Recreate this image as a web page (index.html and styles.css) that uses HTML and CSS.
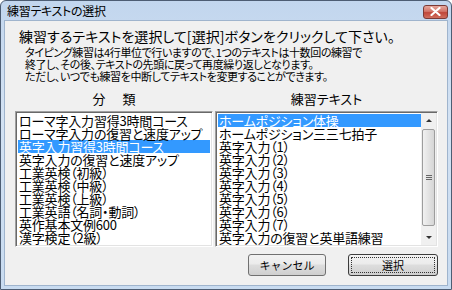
FILE: index.html
```html
<!DOCTYPE html>
<html lang="ja">
<head>
    <meta charset="UTF-8"/>
    <title>練習テキストの選択</title>
    <link rel="stylesheet" href="styles.css">
</head>
<body>
<div class="window">
    <div class="titlebar">
        <span class="title">練習テキストの選択</span>
        <button class="close">
            <svg width="11" height="9" viewBox="0 0 11 9">
                <path d="M1.5 1 L9.5 8 M9.5 1 L1.5 8" stroke="#fff" stroke-width="2.2" stroke-linecap="round"/>
            </svg>
        </button>
    </div>

    <div class="client">
        <p class="lead">練習するテキストを選択して[選択]ボタンをクリックして下さい。</p>
        <p class="note">
            タイピング練習は4行単位で行いますので、1つのテキストは十数回の練習で<br>
            終了し、その後、テキストの先頭に戻って再度繰り返しとなります。<br>
            ただし、いつでも練習を中断してテキストを変更することができます。
        </p>

        <div class="lists">
            <div class="heading spaced">分　類</div>
            <div class="heading">練習テキスト</div>

            <ul class="listbox">
                <li>ローマ字入力習得3時間コース</li>
                <li>ローマ字入力の復習と速度アップ</li>
                <li class="selected">英字入力習得3時間コース</li>
                <li>英字入力の復習と速度アップ</li>
                <li>工業英検（初級）</li>
                <li>工業英検（中級）</li>
                <li>工業英検（上級）</li>
                <li>工業英語（名詞・動詞）</li>
                <li>英作基本文例600</li>
                <li>漢字検定（2級）</li>
            </ul>

            <div class="listbox with-scroll">
                <ul class="items">
                    <li class="selected">ホームポジション体操</li>
                    <li>ホームポジション三三七拍子</li>
                    <li>英字入力（1）</li>
                    <li>英字入力（2）</li>
                    <li>英字入力（3）</li>
                    <li>英字入力（4）</li>
                    <li>英字入力（5）</li>
                    <li>英字入力（6）</li>
                    <li>英字入力（7）</li>
                    <li>英字入力の復習と英単語練習</li>
                    <li>キーボード操作練習</li>
                </ul>
                <div class="scrollbar">
                    <div class="arrow up"></div>
                    <div class="track">
                        <div class="thumb"><span class="grip"></span></div>
                    </div>
                    <div class="arrow down"></div>
                </div>
            </div>
        </div>

        <div class="actions">
            <button class="btn">キャンセル</button>
            <button class="btn default"><span class="focus">選択</span></button>
        </div>
    </div>
</div>
</body>
</html>
```

FILE: styles.css
```css
* {
    margin: 0;
    padding: 0;
    box-sizing: border-box;
}
body {
    font-family: "Noto Sans CJK JP", "Noto Sans", sans-serif;
    font-feature-settings: "palt";
    color: #000;
    background: #fff;
}
.window {
    width: 452px;
    height: 290px;
    display: flex;
    flex-direction: column;
    border: 1px solid #4d5d73;
    border-radius: 6px 6px 0 0;
    padding: 0 3px 3px 3px;
    background: linear-gradient(180deg, #c2d6ee 0%, #d3e2f3 40%, #c8dbf0 100%);
}
.titlebar {
    height: 19px;
    display: flex;
    align-items: center;
    justify-content: space-between;
    padding-left: 3px;
}
.title {
    font-size: 12px;
    line-height: 14px;
    letter-spacing: -0.3px;
}
.close {
    width: 25px;
    height: 14px;
    margin-top: 2px;
    border: 1px solid #7a3a36;
    border-radius: 3px;
    background: linear-gradient(180deg, #e6a79d 0%, #d27468 45%, #c0473a 55%, #d06e5e 100%);
    display: flex;
    align-items: center;
    justify-content: center;
}
.client {
    flex: 1;
    background: #f0f0f0;
    border: 1px solid #9fb4cd;
    padding: 0 9px 0 10px;
    display: flex;
    flex-direction: column;
}
.lead {
    font-size: 14px;
    line-height: 18px;
    margin-top: 6px;
    padding-left: 4px;
    letter-spacing: 0.05px;
}
.note {
    font-size: 11px;
    line-height: 12px;
    margin-top: 1px;
    padding-left: 10px;
    letter-spacing: -0.4px;
}
.lists {
    display: grid;
    grid-template-columns: 198px 223px;
    grid-template-rows: 14px 136px;
    column-gap: 2px;
    row-gap: 5px;
    margin-top: 10px;
}
.heading {
    font-size: 13px;
    line-height: 14px;
    text-align: center;
}
.heading.spaced {
    letter-spacing: 2px;
    padding-left: 2px;
}
.listbox {
    list-style: none;
    background: #fff;
    border-top: 1px solid #a0a0a0;
    border-left: 1px solid #a0a0a0;
    border-right: 1px solid #fff;
    border-bottom: 1px solid #fff;
    box-shadow: inset 1px 1px 0 #696969, inset -1px -1px 0 #e3e3e3;
    padding: 2px 2px 0 2px;
    overflow: hidden;
    font-size: 13px;
    line-height: 13px;
}
.listbox li {
    height: 13px;
    padding-left: 1px;
    white-space: nowrap;
    letter-spacing: -0.2px;
}
.listbox li.selected {
    background: #3399ff;
    color: #fff;
}
.with-scroll {
    display: flex;
    padding-right: 1px;
    padding-bottom: 1px;
}
.items {
    list-style: none;
    flex: 1;
    overflow: hidden;
}
.scrollbar {
    width: 15px;
    display: flex;
    flex-direction: column;
    background: #f0f0f0;
    margin-top: -1px;
}
.arrow {
    height: 15px;
    display: flex;
    align-items: center;
    justify-content: center;
}
.arrow::after {
    content: "";
    border-left: 3px solid transparent;
    border-right: 3px solid transparent;
}
.arrow.up::after {
    border-bottom: 3px solid #333;
}
.arrow.down::after {
    border-top: 3px solid #333;
}
.track {
    flex: 1;
    display: flex;
    flex-direction: column;
    padding: 1px 1px 4px 1px;
}
.thumb {
    flex: 1;
    border: 1px solid #9d9d9d;
    border-radius: 2px;
    background: linear-gradient(90deg, #f1f1f1 0%, #e3e3e3 50%, #d6d6d6 100%);
    display: flex;
    align-items: center;
    justify-content: center;
}
.grip {
    width: 6px;
    height: 6px;
    background: repeating-linear-gradient(180deg, #666 0, #666 1px, transparent 1px, transparent 2px);
}
.actions {
    display: flex;
    justify-content: flex-end;
    gap: 22px;
    margin-top: 7px;
}
.btn {
    width: 78px;
    height: 22px;
    font-family: inherit;
    font-size: 11px;
    border: 1px solid #707070;
    border-radius: 3px;
    background: linear-gradient(180deg, #f2f2f2 0%, #ebebeb 45%, #dddddd 50%, #cfcfcf 100%);
    color: #000;
}
.btn.default {
    width: 90px;
    border-color: #3c3c3c;
    padding: 2px;
}
.focus {
    display: flex;
    align-items: center;
    justify-content: center;
    height: 100%;
    border: 1px dotted #333;
}
```
